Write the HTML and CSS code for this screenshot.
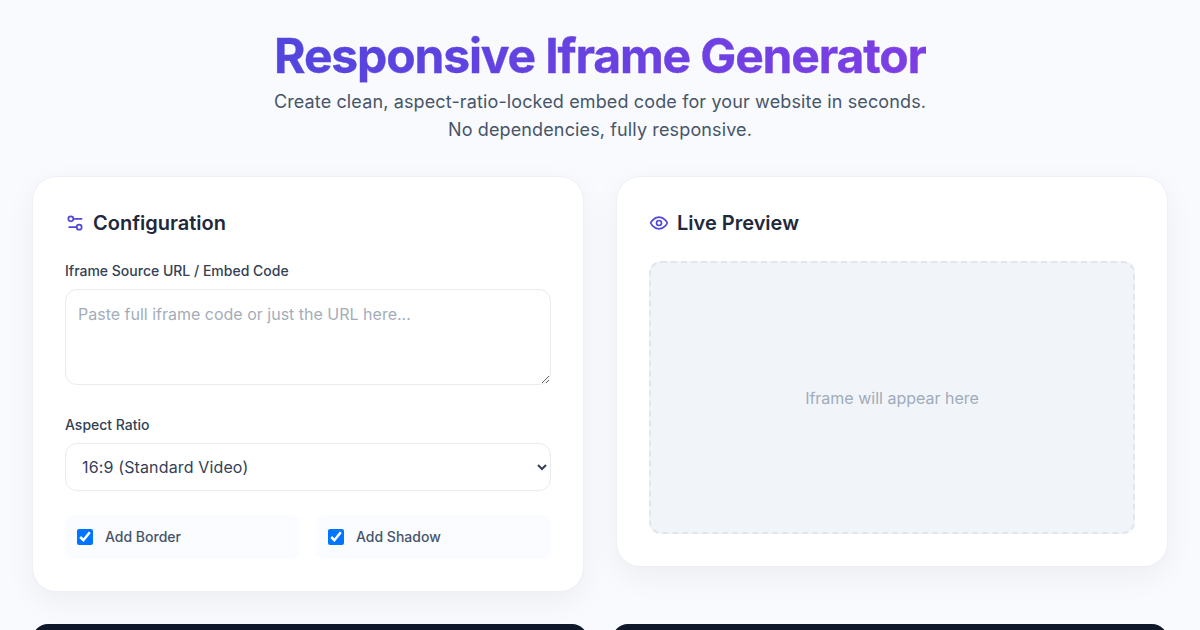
FILE: index.html

```html
<!DOCTYPE html>
<html lang="en">
<head>
  <meta charset="UTF-8" />
  <meta name="viewport" content="width=device-width, initial-scale=1.0" />
  <title>Responsive Iframe Generator</title>
  <link rel="stylesheet" href="styles.css">
</head>
<body>
  <div class="container">
    <header class="header">
      <h1>Responsive Iframe Generator</h1>
      <p>Create clean, aspect-ratio-locked embed code for your website in seconds.<br>No dependencies, fully responsive.</p>
    </header>

    <div class="grid">
      <section class="card">
        <h2 class="card-title">
          <svg class="icon" viewBox="0 0 24 24"><path d="M20 7h-9"/><path d="M14 17H5"/><circle cx="17" cy="17" r="3"/><circle cx="7" cy="7" r="3"/></svg>
          Configuration
        </h2>
        <div class="field">
          <label for="source">Iframe Source URL / Embed Code</label>
          <textarea id="source" placeholder="Paste full iframe code or just the URL here..."></textarea>
        </div>
        <div class="field">
          <label for="ratio">Aspect Ratio</label>
          <select id="ratio">
            <option>16:9 (Standard Video)</option>
            <option>4:3 (Classic)</option>
            <option>1:1 (Square)</option>
          </select>
        </div>
        <div class="options">
          <label class="option"><input type="checkbox" checked> Add Border</label>
          <label class="option"><input type="checkbox" checked> Add Shadow</label>
        </div>
      </section>

      <section class="card">
        <h2 class="card-title">
          <svg class="icon" viewBox="0 0 24 24"><path d="M2 12s3-7 10-7 10 7 10 7-3 7-10 7-10-7-10-7Z"/><circle cx="12" cy="12" r="3"/></svg>
          Live Preview
        </h2>
        <div class="preview">Iframe will appear here</div>
      </section>
    </div>

    <div class="code-grid">
      <div class="code-card"></div>
      <div class="code-card"></div>
    </div>
  </div>
</body>
</html>
```

FILE: styles.css

```css
* { box-sizing: border-box; margin: 0; padding: 0; }
body { background: #f8fafd; color: #1e293b; font-family: 'Inter', sans-serif; }
.container { padding: 26px 32px 32px; }

.header { text-align: center; margin-bottom: 32px; }
.header h1 {
  display: inline-block;
  font-size: 48px;
  line-height: 60px;
  font-weight: 700;
  letter-spacing: -1.15px;
  background: linear-gradient(135deg, #5145de, #7f3ee4);
  -webkit-background-clip: text;
  background-clip: text;
  color: transparent;
  vertical-align: top;
  -webkit-text-stroke: 0.4px transparent;
}
.header p { font-size: 18px; line-height: 28px; letter-spacing: 0.13px; color: #475569; margin-top: 2px; }

.grid { display: grid; grid-template-columns: 1fr 1fr; gap: 32px; align-items: start; }
.card {
  background: white;
  border: 1px solid #edf0f5;
  border-radius: 24px;
  padding: 32px;
  box-shadow: 0 10px 30px rgba(15,23,42,0.05);
}
.card-title {
  display: flex;
  align-items: center;
  gap: 8px;
  font-size: 20px;
  line-height: 28px;
  font-weight: 600;
  margin-bottom: 24px;
}
.icon {
  width: 20px;
  height: 20px;
  fill: none;
  stroke: #5147d6;
  stroke-width: 2;
  stroke-linecap: round;
  stroke-linejoin: round;
}

.field { margin-bottom: 24px; }
.field label { display: block; font-size: 14px; line-height: 20px; font-weight: 500; color: #334155; margin-bottom: 8px; }
textarea, select {
  display: block;
  width: 100%;
  border: 1px solid #e8ebf0;
  border-radius: 12px;
  background: white;
  font-family: inherit;
  font-size: 16px;
  color: #334155;
}
textarea { height: 96px; padding: 12px; line-height: 24px; margin-bottom: 30px; }
textarea::placeholder { color: #a3adba; }
select { height: 48px; padding: 12px; letter-spacing: 0.14px; }
.field:has(textarea) { margin-bottom: 0; }

.options { display: grid; grid-template-columns: 1fr 1fr; gap: 16px; }
.option {
  display: flex;
  align-items: center;
  gap: 12px;
  padding: 12px;
  border-radius: 8px;
  background: #fafcff;
  font-size: 14px;
  line-height: 20px;
  font-weight: 500;
  color: #475569;
}
.option input { width: 16px; height: 16px; }

.preview {
  height: 273px;
  display: flex;
  align-items: center;
  justify-content: center;
  background: #f1f5f9;
  border: 2px dashed #e2e6ec;
  border-radius: 12px;
  font-size: 16px;
  color: #a0abb9;
}

.code-grid { display: grid; grid-template-columns: 1fr 1fr; gap: 24px; margin-top: 32px; }
.code-card { background: #0f172a; border-radius: 16px; height: 200px; }
```
